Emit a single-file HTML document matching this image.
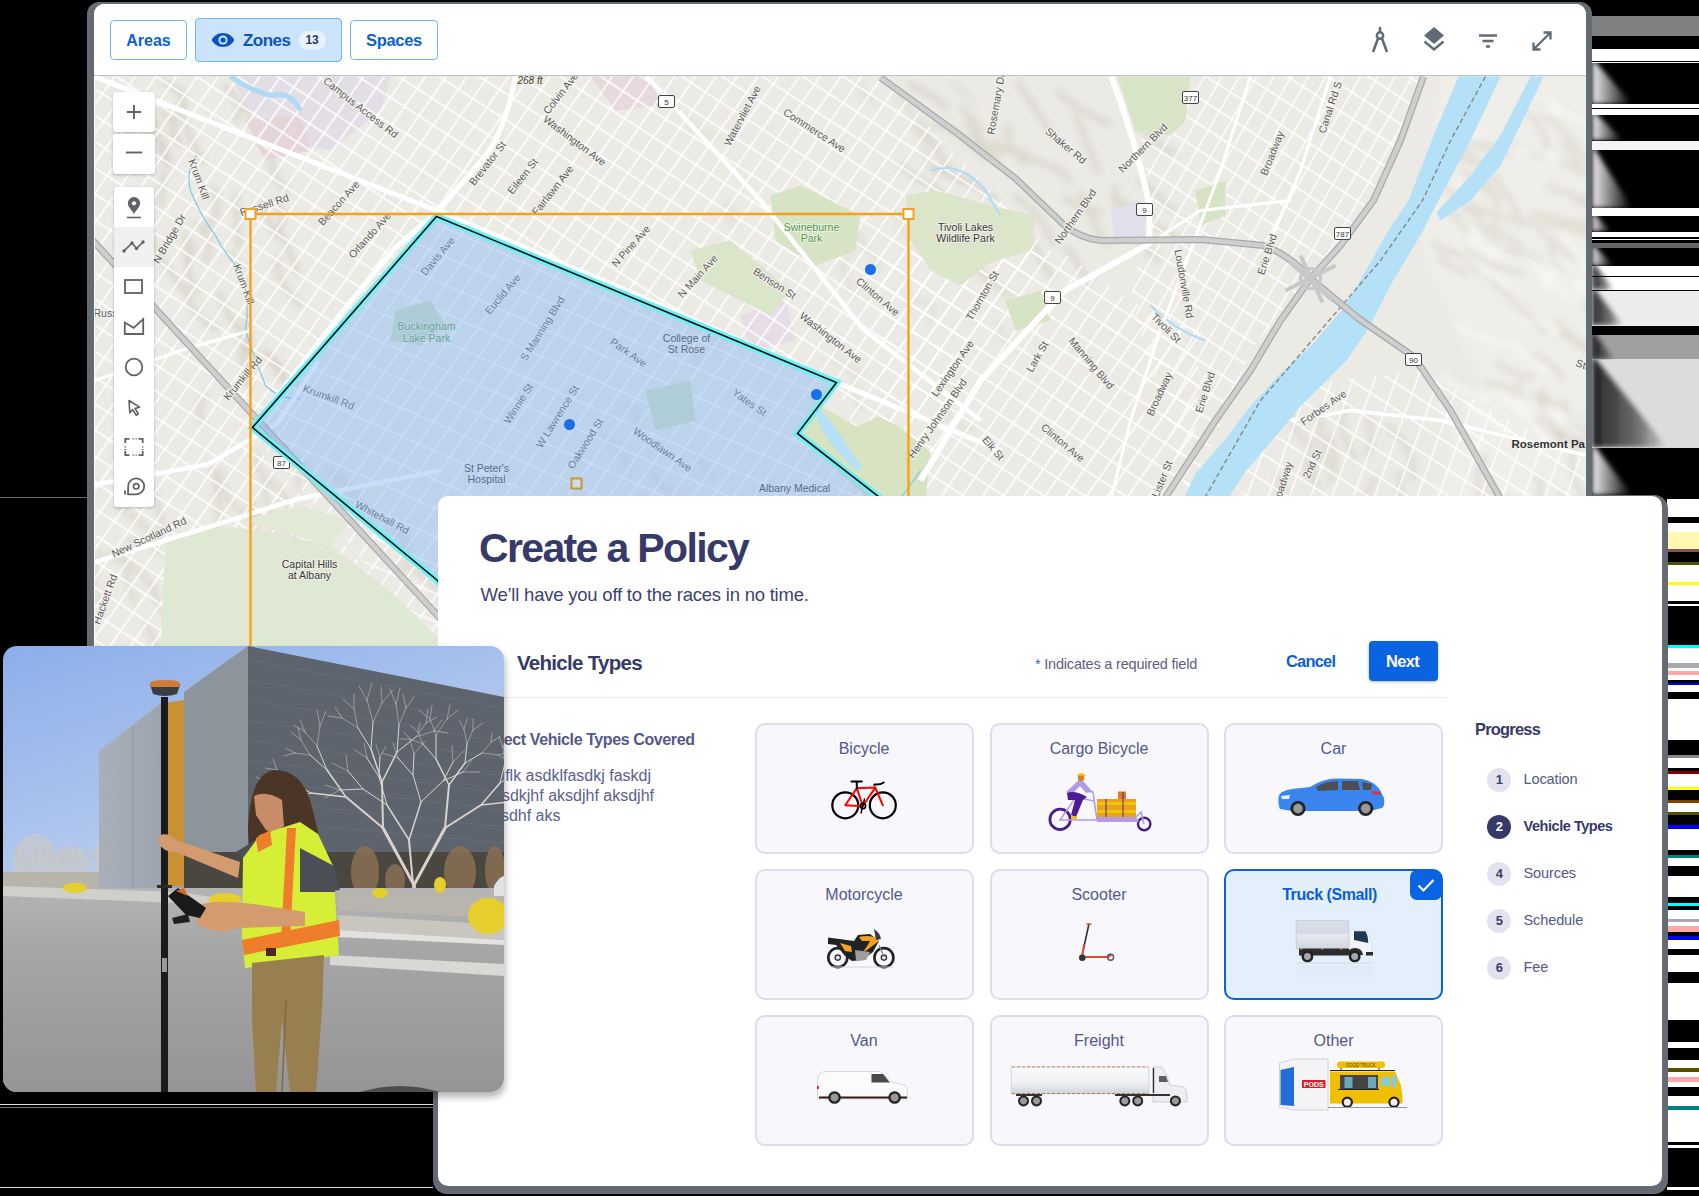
<!DOCTYPE html>
<html><head><meta charset="utf-8">
<style>
*{box-sizing:border-box;margin:0;padding:0}
html,body{width:1699px;height:1196px;overflow:hidden;background:#000;font-family:"Liberation Sans",sans-serif;position:relative}
.abs{position:absolute}
#stripR1{left:1592px;top:0;width:107px;height:495px;background:linear-gradient(to bottom,#000 0.0px 16.3px,#808080 16.3px 35.6px,#000 35.6px 49.0px,#fff 49.0px 60.7px,#000 60.7px 62.0px,#fff 62.0px 63.0px,#000 63.0px 104.0px,#fff 104.0px 108.0px,#000 108.0px 109.0px,#fff 109.0px 114.6px,#000 114.6px 140.6px,#f4f4f4 140.6px 149.6px,#000 149.6px 208.0px,#fff 208.0px 216.0px,#000 216.0px 231.8px,#fff 231.8px 237.0px,#000 237.0px 239.0px,#fff 239.0px 240.0px,#000 240.0px 242.7px,#666 242.7px 248.0px,#000 248.0px 265.7px,#fff 265.7px 276.3px,#000 276.3px 277.0px,#fff 277.0px 290.0px,#000 290.0px 291.0px,#ececec 291.0px 325.6px,#000 325.6px 335.0px,#a0a0a0 335.0px 359.5px,#dcdcdc 359.5px 447.6px,#000 447.6px 495.0px)}
#stripR2{left:1667px;top:495px;width:32px;height:701px;background:linear-gradient(to bottom,#000 0.0px 4.0px,#fff 4.0px 13.0px,#fff 13.0px 22.0px,#000 22.0px 28.0px,#fff 28.0px 37.0px,#fff8b0 37.0px 54.0px,#8a5050 54.0px 57.0px,#000 57.0px 67.0px,#555000 67.0px 70.0px,#fff 70.0px 87.0px,#ffff00 87.0px 90.0px,#fff 90.0px 106.0px,#000 106.0px 109.0px,#fff 109.0px 111.0px,#000 111.0px 150.0px,#00ffff 150.0px 153.0px,#fff 153.0px 168.0px,#aaa 168.0px 173.0px,#fff 173.0px 176.0px,#ffaaaa 176.0px 180.0px,#fff 180.0px 185.0px,#000 185.0px 188.0px,#0000ff 188.0px 190.0px,#fff 190.0px 197.0px,#000 197.0px 204.0px,#fff 204.0px 245.0px,#000 245.0px 260.0px,#888 260.0px 263.0px,#fff 263.0px 273.0px,#000 273.0px 276.0px,#800000 276.0px 279.0px,#fff 279.0px 292.0px,#ffff00 292.0px 295.0px,#000 295.0px 305.0px,#804000 305.0px 308.0px,#fff 308.0px 317.0px,#555000 317.0px 320.0px,#000 320.0px 330.0px,#0000ff 330.0px 334.0px,#fff 334.0px 355.0px,#000 355.0px 360.0px,#008080 360.0px 363.0px,#fff 363.0px 371.0px,#000 371.0px 381.0px,#fff 381.0px 402.0px,#000 402.0px 408.0px,#00ffff 408.0px 411.0px,#000 411.0px 415.0px,#fff 415.0px 424.0px,#aaa 424.0px 427.0px,#fff 427.0px 431.0px,#ffaaaa 431.0px 437.0px,#000 437.0px 441.0px,#0000ff 441.0px 445.0px,#fff 445.0px 454.0px,#000 454.0px 460.0px,#fff 460.0px 477.0px,#000 477.0px 488.0px,#fff 488.0px 525.0px,#000 525.0px 547.0px,#fff 547.0px 553.0px,#000 553.0px 565.0px,#fff 565.0px 573.0px,#555000 573.0px 577.0px,#fff 577.0px 582.0px,#ffaaaa 582.0px 587.0px,#fff 587.0px 592.0px,#000 592.0px 601.0px,#fff 601.0px 611.0px,#008080 611.0px 615.0px,#fff 615.0px 647.0px,#000 647.0px 650.0px,#fff 650.0px 653.0px,#000 653.0px 692.0px,#fff 692.0px 695.0px,#000 695.0px 701.0px)}
#win{left:87px;top:2px;width:1505px;height:1086px;background:#646b73;border-radius:12px 12px 0 0}
#winin{left:6.5px;top:1.5px;width:1492px;height:1084px;background:#fff;border-radius:10px 10px 0 0;overflow:hidden}
#hdr{left:0;top:0;width:1492px;height:72px;background:#fff;border-bottom:1px solid #b9c3cc}
.btn{position:absolute;border:1.5px solid #6cb6f6;border-radius:4px;color:#0b61d8;font-weight:bold;font-size:17px;text-align:center}
#map{left:1px;top:72px;width:1492px;height:1017px;overflow:hidden;background:#ebeae4}
#modalF{left:432.5px;top:495px;width:1235.5px;height:699px;background:#646b73;border-radius:14px}
#modal{left:438px;top:495.5px;width:1224px;height:690px;background:#fff;border-radius:10px}
.tb{background:#fff;border-radius:3px;box-shadow:0 1px 3px rgba(0,0,0,.25)}
.card{border:2px solid #dcdced;border-radius:10px;background:#f7f7fc}
.card.sel{border:2.5px solid #0b62d9;background:#e4effc}
#photo{left:3px;top:646px;width:501px;height:446px;border-radius:14px;overflow:hidden;box-shadow:1px 5px 7px rgba(0,0,0,.3)}
</style></head><body>
<div id="stripR1" class="abs"></div>
<div id="stripR2" class="abs"></div>
<svg class="abs" style="left:1592px;top:0" width="107" height="495"><defs><filter id="wb" x="-50%" y="-50%" width="200%" height="200%"><feGaussianBlur stdDeviation="2.5"/></filter><linearGradient id="gwb" x1="0" y1="0" x2="1" y2="0"><stop offset="0" stop-color="#f0f0f0"/><stop offset="1" stop-color="#f0f0f0" stop-opacity="0"/></linearGradient><linearGradient id="gwd" x1="0" y1="0" x2="1" y2="0"><stop offset="0" stop-color="#000"/><stop offset="0.6" stop-color="#222" stop-opacity=".7"/><stop offset="1" stop-color="#000" stop-opacity="0"/></linearGradient><clipPath id="cb0"><rect x="0" y="63.0" width="107" height="41.0"/></clipPath><clipPath id="cb1"><rect x="0" y="114.6" width="107" height="26.0"/></clipPath><clipPath id="cb2"><rect x="0" y="149.6" width="107" height="58.4"/></clipPath><clipPath id="cb3"><rect x="0" y="216.0" width="107" height="15.8"/></clipPath><clipPath id="cb4"><rect x="0" y="248.0" width="107" height="17.7"/></clipPath><clipPath id="cb5"><rect x="0" y="447.6" width="107" height="47.4"/></clipPath><clipPath id="cb6"><rect x="0" y="291.0" width="107" height="34.6"/></clipPath><clipPath id="cb7"><rect x="0" y="335.0" width="107" height="24.5"/></clipPath><clipPath id="cb8"><rect x="0" y="359.5" width="107" height="88.1"/></clipPath><clipPath id="cb9"><rect x="0" y="265.7" width="107" height="24.3"/></clipPath></defs><path clip-path="url(#cb0)" d="M0 58.0L40.0 104.0L0 104.0Z" fill="url(#gwb)" filter="url(#wb)"/><path clip-path="url(#cb1)" d="M0 109.6L31.2 140.6L0 140.6Z" fill="url(#gwb)" filter="url(#wb)"/><path clip-path="url(#cb2)" d="M0 144.6L40.0 208.0L0 208.0Z" fill="url(#gwb)" filter="url(#wb)"/><path clip-path="url(#cb3)" d="M0 211.0L19.0 231.8L0 231.8Z" fill="url(#gwb)" filter="url(#wb)"/><path clip-path="url(#cb4)" d="M0 243.0L21.2 265.7L0 265.7Z" fill="url(#gwb)" filter="url(#wb)"/><path clip-path="url(#cb5)" d="M0 442.6L40.0 495.0L0 495.0Z" fill="url(#gwb)" filter="url(#wb)"/><path clip-path="url(#cb6)" d="M0 286.0L31.1 325.6L0 325.6Z" fill="url(#gwd)" opacity="0.85" filter="url(#wb)"/><path clip-path="url(#cb7)" d="M0 330.0L22.1 359.5L0 359.5Z" fill="url(#gwd)" opacity="0.85" filter="url(#wb)"/><path clip-path="url(#cb8)" d="M0 354.5L75.0 447.6L0 447.6Z" fill="url(#gwd)" opacity="0.85" filter="url(#wb)"/><path clip-path="url(#cb9)" d="M0 260.7L21.9 290.0L0 290.0Z" fill="url(#gwd)" opacity="0.85" filter="url(#wb)"/></svg>
<div class="abs" style="left:0;top:496.5px;width:88px;height:1.2px;background:#666"></div>
<div class="abs" style="left:0;top:1104px;width:433px;height:1px;background:#ddd"></div>
<div class="abs" style="left:0;top:1187px;width:433px;height:1px;background:#ddd"></div>
<div class="abs" style="left:0;top:1107px;width:433px;height:1px;background:#777"></div>

<div id="modalF" class="abs"></div>
<div id="win" class="abs">
 <div id="winin" class="abs">
  <div id="hdr" class="abs">

   <div class="btn" style="left:16.5px;top:16.5px;width:77px;height:39.5px;line-height:39.5px;font-size:16px;letter-spacing:0px">Areas</div>
   <div class="btn" style="left:101.5px;top:14.5px;width:146.5px;height:43.5px;background:#cce4fb;color:#0b54c0"></div>
   <svg class="abs" style="left:117px;top:28px" width="24" height="16" viewBox="0 0 24 16"><path d="M12 1C6.5 1 2.2 4.4 .6 8c1.6 3.6 5.9 7 11.4 7s9.8-3.4 11.4-7C21.8 4.4 17.5 1 12 1z" fill="#0b54c0"/><circle cx="12" cy="8" r="4.6" fill="#cce4fb"/><circle cx="12" cy="8" r="2.6" fill="#0b54c0"/></svg>
   <div class="abs" style="left:149.5px;top:27px;font-size:17px;font-weight:bold;color:#0b54c0;letter-spacing:-0.55px;line-height:20px">Zones</div>
   <div class="abs" style="left:205px;top:27.5px;width:27px;height:19px;border-radius:10px;background:#e7f2fd;font-size:12px;color:#2b3a55;text-align:center;line-height:19px;font-weight:bold;letter-spacing:-0.2px">13</div>
   <div class="btn" style="left:256.5px;top:16.5px;width:88px;height:39.5px;line-height:39.5px;font-size:16.5px;letter-spacing:-0.3px">Spaces</div>
   <svg class="abs" style="left:1264px;top:21px" width="240" height="32" viewBox="0 0 240 32" fill="none" stroke="#5f6b77" stroke-width="2.6">
    <g transform="translate(22,0)"><line x1="0" y1="3" x2="0" y2="7" stroke-linecap="round"/><circle cx="0" cy="10.5" r="3.2" stroke-width="2.4"/><path d="M-2 13.5L-7 27M2 13.5L7 27" stroke-width="2.6"/></g>
    <g transform="translate(76,16)"><path d="M0 -14L10 -5.5L0 3L-10 -5.5Z" fill="#5f6b77" stroke="none"/><path d="M-9.5 0.5L0 8.5L9.5 0.5" stroke-width="2.4"/></g>
    <g transform="translate(130,0)"><path d="M-9 10.5H9M-5.5 16H5.5M-2 21.5H2" stroke-width="2.3"/></g>
    <g transform="translate(184,16)"><path d="M-8.5 8.5L8.5 -8.5M1.5 -8.5H8.5V-1.5M-8.5 1.5V8.5H-1.5" stroke-width="2.3"/></g>
   </svg>
  </div>
  <div id="map" class="abs"><svg width="1492" height="1017" viewBox="94.5 75.5 1492 1017" style="display:block">
<defs>
<pattern id="pA" width="17" height="400" patternUnits="userSpaceOnUse" patternTransform="rotate(35)"><rect x="0" y="0" width="1.8" height="400" fill="#fff"/></pattern>
<pattern id="pB" width="400" height="22" patternUnits="userSpaceOnUse" patternTransform="rotate(33)"><rect x="0" y="0" width="400" height="1.8" fill="#fff"/></pattern>
<pattern id="pC" width="15" height="400" patternUnits="userSpaceOnUse" patternTransform="rotate(30)"><rect x="0" y="0" width="1.6" height="400" fill="#fff"/></pattern>
<pattern id="pD" width="400" height="26" patternUnits="userSpaceOnUse" patternTransform="rotate(24)"><rect x="0" y="0" width="400" height="1.6" fill="#fff"/></pattern>
<pattern id="pE" width="20" height="400" patternUnits="userSpaceOnUse" patternTransform="rotate(20)"><rect x="0" y="0" width="1.6" height="400" fill="#fff"/></pattern>
<filter id="blur4" x="-50%" y="-50%" width="200%" height="200%"><feGaussianBlur stdDeviation="3"/></filter>
<filter id="blur2" x="-20%" y="-20%" width="140%" height="140%"><feGaussianBlur stdDeviation="1.6"/></filter>
</defs>
<rect x="94" y="75" width="1500" height="1020" fill="#ebeae4"/>
<path d="M1440 76H1590V500H1430L1480 380L1420 250Z" fill="#efeee9" filter="url(#blur4)"/>
<path d="M1482 140Q1514 144 1543 155M1439 257Q1436 258 1466 274M1498 363Q1520 378 1532 376M1522 221Q1575 225 1599 238M1453 129Q1455 148 1482 164M1532 213Q1543 214 1588 226M1539 231Q1555 242 1574 260M1557 321Q1575 341 1590 347M1547 185Q1581 201 1623 207M1454 251Q1477 264 1478 273M1570 194Q1598 213 1620 235M1564 402Q1566 424 1604 439M1534 418Q1561 436 1598 447M1434 242Q1434 253 1471 253M1451 172Q1449 191 1480 212M1518 382Q1530 408 1560 438M1487 382Q1512 388 1562 405M1467 250Q1475 260 1522 273M1489 277Q1517 306 1544 331M1538 108Q1578 142 1587 164M1493 222Q1488 225 1519 245M1463 144Q1466 142 1509 154M1446 210Q1460 216 1465 235M1470 205Q1507 221 1517 218M1505 250Q1515 249 1538 259M1563 143Q1572 149 1579 170M1517 99Q1546 127 1546 147M1472 211Q1486 231 1497 240M1483 164Q1515 200 1519 224M1561 334Q1572 337 1594 358M1434 182Q1468 196 1465 212M1580 416Q1603 429 1648 453M1461 157Q1493 182 1497 208M1534 354Q1563 371 1560 377M1550 248Q1556 269 1575 277M1585 221Q1608 235 1612 263M1450 140Q1460 175 1498 198M1587 307Q1591 312 1625 336M1585 304Q1598 335 1616 351M1562 160Q1571 170 1601 177" stroke="#cdc7b8" stroke-width="6" fill="none" opacity="0.4" filter="url(#blur4)" stroke-linecap="round"/>
<path d="M1471 228Q1476 242 1492 258M1523 388Q1538 410 1552 431M1514 96Q1518 111 1563 113M1458 246Q1477 267 1510 287M1519 349Q1523 355 1547 371M1554 258Q1589 278 1592 301M1528 257Q1546 277 1568 296M1506 401Q1543 422 1545 453M1520 401Q1539 411 1588 422M1442 169Q1465 189 1466 193M1455 326Q1500 345 1515 345M1465 404Q1505 425 1506 432M1456 232Q1469 241 1506 258M1546 96Q1551 108 1594 127M1530 259Q1550 283 1547 288M1447 178Q1448 182 1468 202M1498 391Q1516 413 1563 418M1521 321Q1546 323 1555 329M1442 400Q1445 430 1481 447M1441 375Q1466 395 1488 399M1473 133Q1483 136 1525 154M1438 157Q1469 162 1479 176M1510 149Q1523 143 1557 158M1547 272Q1581 275 1580 294M1561 233Q1574 254 1595 276" stroke="#ffffff" stroke-width="5" fill="none" opacity="0.5" filter="url(#blur4)" stroke-linecap="round"/>
<path d="M1065 247Q1084 269 1086 285M997 139Q994 151 1026 153M961 108Q984 126 977 137M968 121Q969 134 998 150M963 244Q976 278 1010 294M974 141Q985 150 998 160M948 166Q944 172 974 182M910 84Q931 95 946 106M1080 192Q1089 215 1106 244M1136 105Q1136 135 1173 152M1114 187Q1114 213 1143 238M1021 222Q1039 257 1051 276M1064 198Q1067 202 1100 212M925 222Q947 246 958 263M1017 81Q1034 107 1051 133M1058 91Q1066 103 1108 123M1075 115Q1086 140 1097 170M1015 196Q1040 211 1053 243M935 123Q962 131 984 158M915 126Q938 145 948 172M1024 159Q1062 164 1068 180M1135 239Q1159 259 1157 260M1008 126Q1004 145 1023 161M934 169Q977 185 995 200M1113 200Q1121 208 1130 235M901 164Q906 174 940 191M976 223Q997 228 992 248M1122 201Q1144 218 1177 239M1140 180Q1147 186 1173 210M924 222Q923 236 941 260" stroke="#c4bfb1" stroke-width="6" fill="none" opacity="0.4" filter="url(#blur4)" stroke-linecap="round"/>
<path d="M212 188Q224 213 206 226M228 601Q243 620 241 657M243 337Q237 353 249 388M270 153Q270 176 286 191M277 228Q289 248 297 272M163 172Q162 183 160 204M267 648Q266 657 289 682M188 132Q198 155 203 162M245 315Q245 331 254 354M149 238Q165 265 181 287M261 203Q265 217 277 234M274 564Q272 590 308 607M265 350Q276 376 295 385M256 568Q254 587 283 620M213 469Q221 503 217 527M204 394Q194 416 204 421M230 253Q243 270 244 279M156 120Q155 136 164 163M224 86Q248 106 235 120M264 351Q290 370 279 380M183 92Q182 109 188 135M233 607Q237 619 254 633M236 193Q237 213 238 246M276 258Q277 286 301 305M181 623Q181 639 203 659M233 621Q227 644 244 649M160 110Q181 130 169 135M243 649Q242 684 266 701M244 98Q248 117 262 143M164 82Q189 90 177 114M275 198Q288 216 274 236M147 350Q133 366 143 388M266 97Q276 108 265 137M145 116Q168 149 171 167M187 235Q183 268 197 293M184 237Q201 252 185 262M272 94Q295 119 281 126M194 223Q217 236 205 262M252 501Q257 524 254 555M185 286Q188 312 216 329M175 117Q170 139 180 142M264 643Q258 657 284 671M239 335Q250 354 250 366M245 563Q272 579 272 603M219 293Q222 310 245 337" stroke="#c2bcae" stroke-width="5" fill="none" opacity="0.45" filter="url(#blur4)" stroke-linecap="round"/>
<path d="M147 625Q158 656 177 669M270 481Q298 503 288 540M258 610Q242 638 263 674M135 472Q165 501 160 536M394 529Q415 541 401 568M300 566Q296 577 321 599M182 562Q181 580 218 605M329 471Q354 488 356 503M116 452Q130 465 133 495M151 583Q157 611 178 621M202 555Q227 584 224 593M220 473Q219 504 258 519M241 610Q241 627 245 656M99 551Q85 582 104 607M222 541Q234 564 243 570M132 538Q120 562 133 600M420 645Q455 659 457 678M407 566Q439 584 449 613M234 616Q243 638 275 664M273 514Q293 536 295 542M108 554Q144 566 153 594M301 551Q314 575 333 596M241 575Q234 598 264 617M263 482Q267 505 275 541M258 454Q250 468 274 484M271 439Q300 464 310 478M271 442Q302 456 297 485M391 649Q383 688 400 708M264 640Q298 674 309 690M117 507Q153 525 157 552" stroke="#c4beb0" stroke-width="6" fill="none" opacity="0.35" filter="url(#blur4)" stroke-linecap="round"/>
<path d="M926 137Q919 149 935 171M802 211Q797 227 819 225M872 456Q861 468 881 479M855 229Q870 256 879 268M642 497Q666 507 667 527M996 321Q1000 329 1008 349M897 96Q919 121 930 127M834 357Q828 358 860 372M846 259Q836 271 856 293M861 85Q852 90 875 100M690 323Q709 335 718 348M654 473Q649 484 676 490M949 408Q941 422 972 430M825 225Q854 245 849 256M699 459Q702 463 711 477M623 406Q646 408 634 423M680 334Q701 343 696 365M724 203Q738 218 729 224M603 434Q625 450 628 468M690 121Q695 133 713 135M878 434Q895 447 908 463M915 298Q941 305 928 323M952 82Q972 101 973 101M898 215Q904 240 930 248M852 370Q855 396 860 409" stroke="#cdc8bb" stroke-width="5" fill="none" opacity="0.3" filter="url(#blur4)" stroke-linecap="round"/>
<path d="M1487 483Q1490 501 1488 526M1322 455Q1306 461 1318 487M1286 491Q1276 501 1303 528M1485 456Q1468 483 1486 507M1374 478Q1354 513 1368 532M1561 493Q1552 499 1573 524M1538 477Q1542 498 1536 526M1284 392Q1287 415 1304 441M1257 411Q1252 426 1258 449M1578 440Q1562 466 1583 496M1398 473Q1401 487 1400 513M1543 391Q1534 410 1565 441M1509 497Q1512 518 1515 527M1313 439Q1302 468 1310 480M1346 406Q1335 434 1355 456M1278 475Q1282 497 1276 525M1386 427Q1415 443 1412 478M1320 412Q1320 447 1330 468M1329 435Q1339 461 1329 481M1368 419Q1374 441 1366 454" stroke="#c4beb0" stroke-width="6" fill="none" opacity="0.35" filter="url(#blur4)" stroke-linecap="round"/>
<path d="M230 76H390L380 110L330 150L280 140L250 110Z" fill="#e3dee6"/>
<path d="M245 120L300 115L310 150L265 160Z" fill="#e5d5d8"/>
<path d="M590 76H650L660 105L615 110Z" fill="#e8d9dc"/>
<path d="M740 315L785 300L795 340L750 350Z" fill="#e6dde6"/>
<path d="M1110 210L1140 200L1145 240L1115 245Z" fill="#dfe0ea"/>
<path d="M94 76H520L440 215L250 440L94 450Z" fill="url(#pA)" opacity="0.85"/>
<path d="M94 76H520L440 215L250 440L94 450Z" fill="url(#pB)" opacity="0.85"/>
<path d="M520 76H890L940 140L1000 200L1050 250L990 320L900 500L880 500L835 382L436 215Z" fill="url(#pA)" opacity="0.85"/>
<path d="M520 76H890L940 140L1000 200L1050 250L990 320L900 500L880 500L835 382L436 215Z" fill="url(#pB)" opacity="0.85"/>
<path d="M436 215L835 382L797 433L900 520L440 650L250 430Z" fill="url(#pA)" opacity="0.85"/>
<path d="M436 215L835 382L797 433L900 520L440 650L250 430Z" fill="url(#pD)" opacity="0.85"/>
<path d="M880 250L1060 250L1130 300L1200 330L1190 500L880 500Z" fill="url(#pA)" opacity="0.85"/>
<path d="M880 250L1060 250L1130 300L1200 330L1190 500L880 500Z" fill="url(#pB)" opacity="0.85"/>
<path d="M1130 76H1420L1400 140L1350 230L1250 350L1190 500L1130 300L1150 200Z" fill="url(#pC)" opacity="0.85"/>
<path d="M1130 76H1420L1400 140L1350 230L1250 350L1190 500L1130 300L1150 200Z" fill="url(#pB)" opacity="0.85"/>
<path d="M1260 390L1420 370L1586 460V500H1240Z" fill="url(#pE)" opacity="0.85"/>
<path d="M1260 390L1420 370L1586 460V500H1240Z" fill="url(#pB)" opacity="0.85"/>
<path d="M94 450L250 440L440 650H94Z" fill="url(#pA)" opacity="0.85"/>
<path d="M94 450L250 440L440 650H94Z" fill="url(#pB)" opacity="0.85"/>
<path d="M165 540Q200 520 260 530L330 545L400 600L440 640V660H160Z" fill="#dfe8d2"/>
<path d="M240 520L300 505L350 520L330 545Z" fill="#e2e9d6"/>
<path d="M770 195L800 185L860 215L855 250L815 265L775 240Z" fill="#d6e3c4"/>
<path d="M905 195L935 190L990 205L1035 215L1030 250L990 262L960 285L930 270L910 240Z" fill="#dae5ca"/>
<path d="M690 250L730 240L790 290L770 315L700 280Z" fill="#dbe5c9"/>
<path d="M1117 76H1190L1185 120L1170 135L1135 130Z" fill="#d8e4c6"/>
<path d="M1195 190L1225 180L1225 215L1200 225Z" fill="#d6e3c4"/>
<path d="M797 433L819 405L856 426L878 416L899 426L930 452L925 500H870Z" fill="#d8e3c2"/>
<path d="M820 410Q830 420 840 435Q852 455 862 466L856 470Q840 455 828 440Q818 425 815 413Z" fill="#b4e1f7"/>
<path d="M645 390L690 380L695 420L655 430Z" fill="#d3e2c0"/>
<path d="M1005 300L1040 290L1050 320L1015 330Z" fill="#d6e3c4"/>
<path d="M395 310L430 300L445 325L420 345L390 340Z" fill="#cfe0bd"/>
<path d="M196 155Q185 170 190 190Q200 215 215 235Q225 255 240 270Q250 300 245 330Q255 360 265 385Q280 400 300 398" stroke="#7ec8e0" stroke-width="1.2" fill="none"/>
<path d="M880 520Q900 500 920 470" stroke="#7ec8e0" stroke-width="1.2" fill="none"/>
<path d="M930 170Q960 160 985 190L1000 215" stroke="#aedaf5" stroke-width="2" fill="none"/>
<path d="M1150 305Q1175 330 1205 340" stroke="#aedaf5" stroke-width="2" fill="none"/>
<path d="M230 76Q250 90 270 95Q290 90 300 110" stroke="#aedaf5" stroke-width="5" fill="none"/>
<path d="M94 76L441 212L640 296L836 382L1000 450" stroke="#fff" stroke-width="5" fill="none" stroke-linejoin="round"/>
<path d="M515 76Q505 130 483 158L436 212L395 247L342 311L250 430" stroke="#fff" stroke-width="5" fill="none" stroke-linejoin="round"/>
<path d="M646 76L760 200L863 329L980 420" stroke="#fff" stroke-width="4.5" fill="none" stroke-linejoin="round"/>
<path d="M94 484L207 464L277 423L318 361" stroke="#fff" stroke-width="4.5" fill="none" stroke-linejoin="round"/>
<path d="M90 563L213 525L295 499L440 470" stroke="#fff" stroke-width="4.5" fill="none" stroke-linejoin="round"/>
<path d="M1111 76Q1135 140 1149 205L1149 243L1063 291L980 380L920 480" stroke="#fff" stroke-width="6" fill="none" stroke-linejoin="round"/>
<path d="M1149 243L1200 210L1290 200" stroke="#fff" stroke-width="3" fill="none" stroke-linejoin="round"/>
<path d="M1250 76L1220 170L1190 250L1160 330L1130 420L1110 500" stroke="#fff" stroke-width="3" fill="none" stroke-linejoin="round"/>
<path d="M1330 76L1300 170L1270 240" stroke="#fff" stroke-width="3" fill="none" stroke-linejoin="round"/>
<path d="M1290 420L1350 410L1440 420L1586 455" stroke="#fff" stroke-width="3.5" fill="none" stroke-linejoin="round"/>
<path d="M94 380L180 350L250 330" stroke="#fff" stroke-width="3" fill="none" stroke-linejoin="round"/>
<path d="M1458 76L1435 130L1408 200L1386 233L1358 283L1341 310L1310 346L1280 373L1248 408L1223 441L1195 473L1184 497H1228L1245 471L1275 436L1300 406L1346 360L1368 328L1391 283L1421 233L1438 200L1470 140L1500 76Z" fill="#b4e1f7"/>
<path d="M1530 76H1543L1522 120L1500 165L1470 200L1440 220L1436 212L1470 175L1500 135Z" fill="#b4e1f7"/>
<path d="M1485 76L1450 140L1422 200L1380 260L1320 330L1260 400L1205 496" stroke="#7d7a73" stroke-width="1.2" stroke-dasharray="5 3" fill="none"/>
<path d="M60 205L438 616L520 700" stroke="#a9a9a9" stroke-width="7" fill="none" stroke-linejoin="round"/>
<path d="M60 205L438 616L520 700" stroke="#cfcfcf" stroke-width="4.5" fill="none" stroke-linejoin="round"/>
<path d="M880 77L957 133L1015 178L1063 224Q1080 238 1100 240L1200 239L1263 245Q1290 255 1310 278L1358 318L1413 356L1450 410L1501 500" stroke="#a9a9a9" stroke-width="7" fill="none" stroke-linejoin="round"/>
<path d="M880 77L957 133L1015 178L1063 224Q1080 238 1100 240L1200 239L1263 245Q1290 255 1310 278L1358 318L1413 356L1450 410L1501 500" stroke="#cfcfcf" stroke-width="4.5" fill="none" stroke-linejoin="round"/>
<path d="M1423 76L1400 140L1373 200L1340 245L1310 278L1280 320L1250 370L1215 420L1165 497" stroke="#a9a9a9" stroke-width="7" fill="none" stroke-linejoin="round"/>
<path d="M1423 76L1400 140L1373 200L1340 245L1310 278L1280 320L1250 370L1215 420L1165 497" stroke="#cfcfcf" stroke-width="4.5" fill="none" stroke-linejoin="round"/>
<path d="M1290 262L1332 300M1285 290L1335 265M1300 255L1322 302" stroke="#c8c8c8" stroke-width="4"/><circle cx="1310" cy="278" r="10" fill="none" stroke="#c8c8c8" stroke-width="3"/>
<rect x="658.0" y="95.0" width="16" height="12" rx="1.5" fill="#fff" stroke="#444" stroke-width="1"/><text x="666.0" y="104.0" font-size="8" text-anchor="middle" fill="#333" font-family="Liberation Sans">5</text>
<rect x="1182.0" y="91.0" width="16" height="12" rx="1.5" fill="#fff" stroke="#444" stroke-width="1"/><text x="1190.0" y="100.0" font-size="8" text-anchor="middle" fill="#333" font-family="Liberation Sans">377</text>
<rect x="1136.0" y="203.0" width="16" height="12" rx="1.5" fill="#fff" stroke="#444" stroke-width="1"/><text x="1144.0" y="212.0" font-size="8" text-anchor="middle" fill="#333" font-family="Liberation Sans">9</text>
<rect x="1044.0" y="291.0" width="16" height="12" rx="1.5" fill="#fff" stroke="#444" stroke-width="1"/><text x="1052.0" y="300.0" font-size="8" text-anchor="middle" fill="#333" font-family="Liberation Sans">9</text>
<rect x="1334.0" y="227.0" width="16" height="12" rx="1.5" fill="#fff" stroke="#444" stroke-width="1"/><text x="1342.0" y="236.0" font-size="8" text-anchor="middle" fill="#333" font-family="Liberation Sans">787</text>
<rect x="1405.0" y="353.0" width="16" height="12" rx="1.5" fill="#fff" stroke="#444" stroke-width="1"/><text x="1413.0" y="362.0" font-size="8" text-anchor="middle" fill="#333" font-family="Liberation Sans">90</text>
<rect x="273.0" y="456.0" width="16" height="12" rx="1.5" fill="#fff" stroke="#444" stroke-width="1"/><text x="281.0" y="465.0" font-size="8" text-anchor="middle" fill="#333" font-family="Liberation Sans">87</text>
<text transform="translate(358 110) rotate(38)" font-size="10.5" text-anchor="middle" fill="#5a5a5a" font-family="Liberation Sans" stroke="#f4f3ee" stroke-width="2" paint-order="stroke">Campus Access Rd</text>
<text transform="translate(563 95) rotate(-52)" font-size="10.5" text-anchor="middle" fill="#5a5a5a" font-family="Liberation Sans" stroke="#f4f3ee" stroke-width="2" paint-order="stroke">Colvin Ave</text>
<text transform="translate(572 143) rotate(37)" font-size="10.5" text-anchor="middle" fill="#5a5a5a" font-family="Liberation Sans" stroke="#f4f3ee" stroke-width="2" paint-order="stroke">Washington Ave</text>
<text transform="translate(490 165) rotate(-52)" font-size="10.5" text-anchor="middle" fill="#5a5a5a" font-family="Liberation Sans" stroke="#f4f3ee" stroke-width="2" paint-order="stroke">Brevator St</text>
<text transform="translate(525 178) rotate(-52)" font-size="10.5" text-anchor="middle" fill="#5a5a5a" font-family="Liberation Sans" stroke="#f4f3ee" stroke-width="2" paint-order="stroke">Eileen St</text>
<text transform="translate(555 192) rotate(-52)" font-size="10.5" text-anchor="middle" fill="#5a5a5a" font-family="Liberation Sans" stroke="#f4f3ee" stroke-width="2" paint-order="stroke">Fairlawn Ave</text>
<text transform="translate(341 205) rotate(-48)" font-size="10.5" text-anchor="middle" fill="#5a5a5a" font-family="Liberation Sans" stroke="#f4f3ee" stroke-width="2" paint-order="stroke">Beacon Ave</text>
<text transform="translate(372 237) rotate(-48)" font-size="10.5" text-anchor="middle" fill="#5a5a5a" font-family="Liberation Sans" stroke="#f4f3ee" stroke-width="2" paint-order="stroke">Orlando Ave</text>
<text transform="translate(265 208) rotate(-18)" font-size="10.5" text-anchor="middle" fill="#5a5a5a" font-family="Liberation Sans" stroke="#f4f3ee" stroke-width="2" paint-order="stroke">Russell Rd</text>
<text transform="translate(172 240) rotate(-60)" font-size="10.5" text-anchor="middle" fill="#5a5a5a" font-family="Liberation Sans" stroke="#f4f3ee" stroke-width="2" paint-order="stroke">N Bridge Dr</text>
<text transform="translate(195 180) rotate(70)" font-size="10.5" text-anchor="middle" fill="#5a5a5a" font-family="Liberation Sans" stroke="#f4f3ee" stroke-width="2" paint-order="stroke">Krum Kill</text>
<text transform="translate(240 285) rotate(70)" font-size="10.5" text-anchor="middle" fill="#5a5a5a" font-family="Liberation Sans" stroke="#f4f3ee" stroke-width="2" paint-order="stroke">Krum Kill</text>
<text transform="translate(745 117) rotate(-62)" font-size="10.5" text-anchor="middle" fill="#5a5a5a" font-family="Liberation Sans" stroke="#f4f3ee" stroke-width="2" paint-order="stroke">Watervliet Ave</text>
<text transform="translate(812 133) rotate(33)" font-size="10.5" text-anchor="middle" fill="#5a5a5a" font-family="Liberation Sans" stroke="#f4f3ee" stroke-width="2" paint-order="stroke">Commerce Ave</text>
<text transform="translate(633 248) rotate(-48)" font-size="10.5" text-anchor="middle" fill="#5a5a5a" font-family="Liberation Sans" stroke="#f4f3ee" stroke-width="2" paint-order="stroke">N Pine Ave</text>
<text transform="translate(700 278) rotate(-48)" font-size="10.5" text-anchor="middle" fill="#5a5a5a" font-family="Liberation Sans" stroke="#f4f3ee" stroke-width="2" paint-order="stroke">N Main Ave</text>
<text transform="translate(772 286) rotate(33)" font-size="10.5" text-anchor="middle" fill="#5a5a5a" font-family="Liberation Sans" stroke="#f4f3ee" stroke-width="2" paint-order="stroke">Benson St</text>
<text transform="translate(875 299) rotate(40)" font-size="10.5" text-anchor="middle" fill="#5a5a5a" font-family="Liberation Sans" stroke="#f4f3ee" stroke-width="2" paint-order="stroke">Clinton Ave</text>
<text transform="translate(828 340) rotate(38)" font-size="10.5" text-anchor="middle" fill="#5a5a5a" font-family="Liberation Sans" stroke="#f4f3ee" stroke-width="2" paint-order="stroke">Washington Ave</text>
<text transform="translate(440 258) rotate(-50)" font-size="10.5" text-anchor="middle" fill="#5a5a5a" font-family="Liberation Sans" stroke="#f4f3ee" stroke-width="2" paint-order="stroke">Davis Ave</text>
<text transform="translate(505 296) rotate(-50)" font-size="10.5" text-anchor="middle" fill="#5a5a5a" font-family="Liberation Sans" stroke="#f4f3ee" stroke-width="2" paint-order="stroke">Euclid Ave</text>
<text transform="translate(545 330) rotate(-58)" font-size="10.5" text-anchor="middle" fill="#5a5a5a" font-family="Liberation Sans" stroke="#f4f3ee" stroke-width="2" paint-order="stroke">S Manning Blvd</text>
<text transform="translate(626 355) rotate(35)" font-size="10.5" text-anchor="middle" fill="#5a5a5a" font-family="Liberation Sans" stroke="#f4f3ee" stroke-width="2" paint-order="stroke">Park Ave</text>
<text transform="translate(747 405) rotate(35)" font-size="10.5" text-anchor="middle" fill="#5a5a5a" font-family="Liberation Sans" stroke="#f4f3ee" stroke-width="2" paint-order="stroke">Yates St</text>
<text transform="translate(521 405) rotate(-58)" font-size="10.5" text-anchor="middle" fill="#5a5a5a" font-family="Liberation Sans" stroke="#f4f3ee" stroke-width="2" paint-order="stroke">Winnie St</text>
<text transform="translate(560 418) rotate(-58)" font-size="10.5" text-anchor="middle" fill="#5a5a5a" font-family="Liberation Sans" stroke="#f4f3ee" stroke-width="2" paint-order="stroke">W Lawrence St</text>
<text transform="translate(588 445) rotate(-58)" font-size="10.5" text-anchor="middle" fill="#5a5a5a" font-family="Liberation Sans" stroke="#f4f3ee" stroke-width="2" paint-order="stroke">Oakwood St</text>
<text transform="translate(660 452) rotate(35)" font-size="10.5" text-anchor="middle" fill="#5a5a5a" font-family="Liberation Sans" stroke="#f4f3ee" stroke-width="2" paint-order="stroke">Woodlawn Ave</text>
<text transform="translate(327 400) rotate(20)" font-size="10.5" text-anchor="middle" fill="#5a5a5a" font-family="Liberation Sans" stroke="#f4f3ee" stroke-width="2" paint-order="stroke">Krumkill Rd</text>
<text transform="translate(245 380) rotate(-50)" font-size="10.5" text-anchor="middle" fill="#5a5a5a" font-family="Liberation Sans" stroke="#f4f3ee" stroke-width="2" paint-order="stroke">Krumkill Rd</text>
<text transform="translate(380 520) rotate(28)" font-size="10.5" text-anchor="middle" fill="#5a5a5a" font-family="Liberation Sans" stroke="#f4f3ee" stroke-width="2" paint-order="stroke">Whitehall Rd</text>
<text transform="translate(999 104) rotate(-80)" font-size="10.5" text-anchor="middle" fill="#5a5a5a" font-family="Liberation Sans" stroke="#f4f3ee" stroke-width="2" paint-order="stroke">Rosemary Dr</text>
<text transform="translate(1063 148) rotate(40)" font-size="10.5" text-anchor="middle" fill="#5a5a5a" font-family="Liberation Sans" stroke="#f4f3ee" stroke-width="2" paint-order="stroke">Shaker Rd</text>
<text transform="translate(1145 150) rotate(-45)" font-size="10.5" text-anchor="middle" fill="#5a5a5a" font-family="Liberation Sans" stroke="#f4f3ee" stroke-width="2" paint-order="stroke">Northern Blvd</text>
<text transform="translate(1078 218) rotate(-55)" font-size="10.5" text-anchor="middle" fill="#5a5a5a" font-family="Liberation Sans" stroke="#f4f3ee" stroke-width="2" paint-order="stroke">Northern Blvd</text>
<text transform="translate(1180 284) rotate(80)" font-size="10.5" text-anchor="middle" fill="#5a5a5a" font-family="Liberation Sans" stroke="#f4f3ee" stroke-width="2" paint-order="stroke">Loudonville Rd</text>
<text transform="translate(1275 154) rotate(-68)" font-size="10.5" text-anchor="middle" fill="#5a5a5a" font-family="Liberation Sans" stroke="#f4f3ee" stroke-width="2" paint-order="stroke">Broadway</text>
<text transform="translate(1333 108) rotate(-72)" font-size="10.5" text-anchor="middle" fill="#5a5a5a" font-family="Liberation Sans" stroke="#f4f3ee" stroke-width="2" paint-order="stroke">Canal Rd S</text>
<text transform="translate(1270 255) rotate(-72)" font-size="10.5" text-anchor="middle" fill="#5a5a5a" font-family="Liberation Sans" stroke="#f4f3ee" stroke-width="2" paint-order="stroke">Erie Blvd</text>
<text transform="translate(985 297) rotate(-60)" font-size="10.5" text-anchor="middle" fill="#5a5a5a" font-family="Liberation Sans" stroke="#f4f3ee" stroke-width="2" paint-order="stroke">Thornton St</text>
<text transform="translate(955 370) rotate(-55)" font-size="10.5" text-anchor="middle" fill="#5a5a5a" font-family="Liberation Sans" stroke="#f4f3ee" stroke-width="2" paint-order="stroke">Lexington Ave</text>
<text transform="translate(1040 358) rotate(-60)" font-size="10.5" text-anchor="middle" fill="#5a5a5a" font-family="Liberation Sans" stroke="#f4f3ee" stroke-width="2" paint-order="stroke">Lark St</text>
<text transform="translate(1088 365) rotate(50)" font-size="10.5" text-anchor="middle" fill="#5a5a5a" font-family="Liberation Sans" stroke="#f4f3ee" stroke-width="2" paint-order="stroke">Manning Blvd</text>
<text transform="translate(1163 330) rotate(45)" font-size="10.5" text-anchor="middle" fill="#5a5a5a" font-family="Liberation Sans" stroke="#f4f3ee" stroke-width="2" paint-order="stroke">Tivoli St</text>
<text transform="translate(1162 395) rotate(-65)" font-size="10.5" text-anchor="middle" fill="#5a5a5a" font-family="Liberation Sans" stroke="#f4f3ee" stroke-width="2" paint-order="stroke">Broadway</text>
<text transform="translate(1208 393) rotate(-72)" font-size="10.5" text-anchor="middle" fill="#5a5a5a" font-family="Liberation Sans" stroke="#f4f3ee" stroke-width="2" paint-order="stroke">Erie Blvd</text>
<text transform="translate(940 420) rotate(-55)" font-size="10.5" text-anchor="middle" fill="#5a5a5a" font-family="Liberation Sans" stroke="#f4f3ee" stroke-width="2" paint-order="stroke">Henry Johnson Blvd</text>
<text transform="translate(990 450) rotate(50)" font-size="10.5" text-anchor="middle" fill="#5a5a5a" font-family="Liberation Sans" stroke="#f4f3ee" stroke-width="2" paint-order="stroke">Elk St</text>
<text transform="translate(1060 445) rotate(40)" font-size="10.5" text-anchor="middle" fill="#5a5a5a" font-family="Liberation Sans" stroke="#f4f3ee" stroke-width="2" paint-order="stroke">Clinton Ave</text>
<text transform="translate(1325 410) rotate(-35)" font-size="10.5" text-anchor="middle" fill="#5a5a5a" font-family="Liberation Sans" stroke="#f4f3ee" stroke-width="2" paint-order="stroke">Forbes Ave</text>
<text transform="translate(1315 465) rotate(-65)" font-size="10.5" text-anchor="middle" fill="#5a5a5a" font-family="Liberation Sans" stroke="#f4f3ee" stroke-width="2" paint-order="stroke">2nd St</text>
<text transform="translate(1165 480) rotate(-68)" font-size="10.5" text-anchor="middle" fill="#5a5a5a" font-family="Liberation Sans" stroke="#f4f3ee" stroke-width="2" paint-order="stroke">Lister St</text>
<text transform="translate(1285 485) rotate(-72)" font-size="10.5" text-anchor="middle" fill="#5a5a5a" font-family="Liberation Sans" stroke="#f4f3ee" stroke-width="2" paint-order="stroke">Broadway</text>
<text transform="translate(1582 368) rotate(20)" font-size="10.5" text-anchor="middle" fill="#5a5a5a" font-family="Liberation Sans" stroke="#f4f3ee" stroke-width="2" paint-order="stroke">Ste</text>
<text transform="translate(150 540) rotate(-25)" font-size="10.5" text-anchor="middle" fill="#5a5a5a" font-family="Liberation Sans" stroke="#f4f3ee" stroke-width="2" paint-order="stroke">New Scotland Rd</text>
<text transform="translate(108 600) rotate(-70)" font-size="10.5" text-anchor="middle" fill="#5a5a5a" font-family="Liberation Sans" stroke="#f4f3ee" stroke-width="2" paint-order="stroke">Hackett Rd</text>
<text transform="translate(105 316) rotate(0)" font-size="10.5" text-anchor="middle" fill="#5a5a5a" font-family="Liberation Sans" stroke="#f4f3ee" stroke-width="2" paint-order="stroke">Russ</text>
<text x="811" y="230" font-size="10.5" text-anchor="middle" fill="#4a9a3c" font-family="Liberation Sans" stroke="#f4f3ee" stroke-width="1.5" paint-order="stroke">Swineburne</text>
<text x="811" y="241" font-size="10.5" text-anchor="middle" fill="#4a9a3c" font-family="Liberation Sans" stroke="#f4f3ee" stroke-width="1.5" paint-order="stroke">Park</text>
<text x="965" y="230" font-size="10.5" text-anchor="middle" fill="#333" font-family="Liberation Sans" stroke="#f4f3ee" stroke-width="1.5" paint-order="stroke">Tivoli Lakes</text>
<text x="965" y="241" font-size="10.5" text-anchor="middle" fill="#333" font-family="Liberation Sans" stroke="#f4f3ee" stroke-width="1.5" paint-order="stroke">Wildlife Park</text>
<text x="426" y="329" font-size="10.5" text-anchor="middle" fill="#4a9a3c" font-family="Liberation Sans" stroke="#f4f3ee" stroke-width="1.5" paint-order="stroke">Buckingham</text>
<text x="426" y="341" font-size="10.5" text-anchor="middle" fill="#4a9a3c" font-family="Liberation Sans" stroke="#f4f3ee" stroke-width="1.5" paint-order="stroke">Lake Park</text>
<text x="686" y="341" font-size="10.5" text-anchor="middle" fill="#333" font-family="Liberation Sans" stroke="#f4f3ee" stroke-width="1.5" paint-order="stroke">College of</text>
<text x="686" y="352" font-size="10.5" text-anchor="middle" fill="#333" font-family="Liberation Sans" stroke="#f4f3ee" stroke-width="1.5" paint-order="stroke">St Rose</text>
<text x="486" y="471" font-size="10.5" text-anchor="middle" fill="#333" font-family="Liberation Sans" stroke="#f4f3ee" stroke-width="1.5" paint-order="stroke">St Peter's</text>
<text x="486" y="482" font-size="10.5" text-anchor="middle" fill="#333" font-family="Liberation Sans" stroke="#f4f3ee" stroke-width="1.5" paint-order="stroke">Hospital</text>
<text x="794" y="491" font-size="10.5" text-anchor="middle" fill="#333" font-family="Liberation Sans" stroke="#f4f3ee" stroke-width="1.5" paint-order="stroke">Albany Medical</text>
<text x="309" y="567" font-size="10.5" text-anchor="middle" fill="#333" font-family="Liberation Sans" stroke="#f4f3ee" stroke-width="1.5" paint-order="stroke">Capital Hills</text>
<text x="309" y="578" font-size="10.5" text-anchor="middle" fill="#333" font-family="Liberation Sans" stroke="#f4f3ee" stroke-width="1.5" paint-order="stroke">at Albany</text>
<text x="1511" y="447" font-size="11.5" font-weight="bold" fill="#333" font-family="Liberation Sans">Rosemont Pa</text>
<text x="517" y="83" font-size="10" font-style="italic" fill="#4a3c20" font-family="Liberation Sans">268 ft</text>
<path d="M436 216L836 382L797 433L960 560L700 1000L437 580L252 427Z" fill="#7eb0f5" fill-opacity="0.42" stroke="#6ff0f4" stroke-width="7" stroke-linejoin="miter"/>
<path d="M436 216L836 382L797 433L960 560L700 1000L437 580L252 427Z" fill="none" stroke="#111" stroke-width="1.6"/>
<path d="M250 213.5H908V700M250 213.5V700" stroke="#f5a11c" stroke-width="2.4" fill="none"/>
<rect x="245.0" y="208.5" width="10" height="10" fill="#fff" stroke="#f5a11c" stroke-width="2"/>
<rect x="903.0" y="208.5" width="10" height="10" fill="#fff" stroke="#f5a11c" stroke-width="2"/>
<rect x="571" y="478" width="10" height="10" fill="#cfdcf0" stroke="#d0952a" stroke-width="2"/>
<circle cx="870" cy="269" r="5.5" fill="#1a6ee8"/>
<circle cx="816" cy="394" r="5.5" fill="#1a6ee8"/>
<circle cx="569" cy="424" r="5.5" fill="#1a6ee8"/>
</svg></div>
 </div>
</div>


<div id="tools" class="abs" style="left:0;top:0">
 <div class="abs tb" style="left:113px;top:92px;width:42px;height:40px"></div>
 <div class="abs tb" style="left:113px;top:134px;width:42px;height:40px"></div>
 <div class="abs tb" style="left:114px;top:187px;width:40px;height:320px"></div>
 <div class="abs" style="left:114px;top:227px;width:40px;height:40px;background:#f0f0f0"></div>
 <svg class="abs" style="left:0;top:0" width="200" height="520" fill="none" stroke="#5f6368" stroke-width="2">
  <path d="M127 112H141M134 105V119" stroke-width="1.9"/>
  <path d="M125.8 152.5H142.2" stroke-width="1.9"/>
  <path d="M134 214.5c-.5-3-6.2-7-6.2-11.2a6.2 6.2 0 0 1 12.4 0c0 4.2-5.7 8.2-6.2 11.2z" fill="#5f6368" stroke="none"/><circle cx="134" cy="203.3" r="2.1" fill="#fff" stroke="none"/><path d="M127 217.5H141" stroke-width="1.6"/>
  <path d="M124 251L132 243L136.5 248.5L143 242" stroke-width="1.7"/><circle cx="124" cy="251" r="1.7" fill="#5f6368" stroke="none"/><circle cx="132" cy="243" r="1.7" fill="#5f6368" stroke="none"/><circle cx="136.5" cy="248.5" r="1.7" fill="#5f6368" stroke="none"/><circle cx="143" cy="242" r="1.7" fill="#5f6368" stroke="none"/>
  <rect x="125" y="280" width="17" height="13" stroke-width="1.8"/>
  <path d="M124.8 322.5V334H143.2V319L133.6 327.8Z" stroke-width="1.8" stroke-linejoin="miter"/>
  <circle cx="134" cy="367" r="8.3" stroke-width="1.8"/>
  <path d="M129 400.5L139.5 407.2L135 408.4L138.3 414L136.2 415.3L132.8 409.6L129.8 412.8Z" fill="none" stroke-width="1.6" stroke-linejoin="round"/>
  <path d="M125.3 443V438.8H129.5M138.5 438.8H142.7V443M142.7 451V455.2H138.5M129.5 455.2H125.3V451" stroke-width="1.8"/><path d="M132.6 438.8H133.6M135.6 438.8H136.6M132.6 455.2H133.6M135.6 455.2H136.6M125.3 446.4V447.4M125.3 449V450M142.7 446.4V447.4M142.7 449V450" stroke-width="1.8"/>
  <path d="M128 494.3H136.2a8 8 0 1 0 -8 -8Z" stroke-width="1.8" stroke-linejoin="round"/><circle cx="136.2" cy="486.3" r="2.7" stroke-width="1.7"/><path d="M125 490.5V494.5" stroke-width="1.8"/>
 </svg>
</div>
<div id="modal" class="abs"></div>
<div id="mc" class="abs" style="left:0;top:0;width:1699px;height:1196px">
 <div class="abs" style="left:479px;top:522.5px;font-size:41px;font-weight:bold;color:#353a6a;letter-spacing:-1.65px;line-height:50px;white-space:nowrap">Create a Policy</div>
 <div class="abs" style="left:480.5px;top:583px;font-size:18.5px;color:#3d4270;letter-spacing:-0.22px;line-height:24px;white-space:nowrap">We’ll have you off to the races in no time.</div>
 <div class="abs" style="left:517px;top:651px;font-size:20.5px;font-weight:bold;color:#353a6a;letter-spacing:-0.7px;line-height:24px;white-space:nowrap">Vehicle Types</div>
 <div class="abs" style="left:1035px;top:655px;font-size:14.5px;color:#5d6085;letter-spacing:-0.2px;line-height:18px;white-space:nowrap"><span style="color:#1f6fe0">*</span> Indicates a required field</div>
 <div class="abs" style="left:1286px;top:651px;font-size:16.4px;font-weight:bold;color:#0b5fd6;letter-spacing:-0.75px;line-height:20px;white-space:nowrap">Cancel</div>
 <div class="abs" style="left:1368.5px;top:641px;width:69.5px;height:40px;background:#0a63e0;border-radius:4px;box-shadow:0 1px 3px rgba(0,0,0,.3)"></div>
 <div class="abs" style="left:1386px;top:651px;font-size:16.4px;font-weight:bold;color:#fff;letter-spacing:-0.6px;line-height:20px;white-space:nowrap">Next</div>
 <div class="abs" style="left:438px;top:696.5px;width:1009px;height:1.5px;background:#eceef4"></div>
 <div class="abs" style="left:481px;top:730px;font-size:16px;font-weight:bold;color:#54598a;letter-spacing:-0.4px;line-height:20px;white-space:nowrap">Select Vehicle Types Covered</div>
 <div class="abs" style="left:400px;top:766px;width:251px;text-align:right;font-size:16px;color:#5c6191;line-height:20px;white-space:nowrap">asdkjflk asdklfasdkj faskdj</div>
 <div class="abs" style="left:400px;top:786px;width:254px;text-align:right;font-size:16px;color:#5c6191;line-height:20px;white-space:nowrap">asdkjhf aksdjhf aksdjhf</div>
 <div class="abs" style="left:400px;top:806px;width:160.5px;text-align:right;font-size:16px;color:#5c6191;line-height:20px;white-space:nowrap">asdhf aks</div>
 <div class="abs card" style="left:754.5px;top:723px;width:219px;height:131px;"></div>
 <div class="abs" style="left:754.5px;top:739px;width:219px;text-align:center;font-size:16px;color:#54598a;line-height:20px">Bicycle</div>
 <div class="abs card" style="left:989.5px;top:723px;width:219px;height:131px;"></div>
 <div class="abs" style="left:989.5px;top:739px;width:219px;text-align:center;font-size:16px;color:#54598a;line-height:20px">Cargo Bicycle</div>
 <div class="abs card" style="left:1224.0px;top:723px;width:219px;height:131px;"></div>
 <div class="abs" style="left:1224.0px;top:739px;width:219px;text-align:center;font-size:16px;color:#54598a;line-height:20px">Car</div>
 <div class="abs card" style="left:754.5px;top:869px;width:219px;height:131px;"></div>
 <div class="abs" style="left:754.5px;top:885px;width:219px;text-align:center;font-size:16px;color:#54598a;line-height:20px">Motorcycle</div>
 <div class="abs card" style="left:989.5px;top:869px;width:219px;height:131px;"></div>
 <div class="abs" style="left:989.5px;top:885px;width:219px;text-align:center;font-size:16px;color:#54598a;line-height:20px">Scooter</div>
 <div class="abs card sel" style="left:1224.0px;top:869px;width:219px;height:131px;"></div>
 <div class="abs" style="left:1220.0px;top:885px;width:219px;text-align:center;font-size:16px;font-weight:bold;color:#0b5fd6;letter-spacing:-0.45px;line-height:20px">Truck (Small)</div>
 <div class="abs card" style="left:754.5px;top:1015px;width:219px;height:131px;"></div>
 <div class="abs" style="left:754.5px;top:1031px;width:219px;text-align:center;font-size:16px;color:#54598a;line-height:20px">Van</div>
 <div class="abs card" style="left:989.5px;top:1015px;width:219px;height:131px;"></div>
 <div class="abs" style="left:989.5px;top:1031px;width:219px;text-align:center;font-size:16px;color:#54598a;line-height:20px">Freight</div>
 <div class="abs card" style="left:1224.0px;top:1015px;width:219px;height:131px;"></div>
 <div class="abs" style="left:1224.0px;top:1031px;width:219px;text-align:center;font-size:16px;color:#54598a;line-height:20px">Other</div>
 <div class="abs" style="left:1410px;top:870px;width:32px;height:30px;background:#0a63e0;border-radius:7px 9px 7px 7px"></div>
 <svg class="abs" style="left:1410px;top:870px" width="32" height="30"><path d="M8.5 15.5L13.5 20.5L23.5 10" fill="none" stroke="#fff" stroke-width="2.2"/></svg>
 <div class="abs" style="left:1475px;top:719px;font-size:16.4px;font-weight:bold;color:#353a6a;letter-spacing:-0.75px;line-height:20px;white-space:nowrap">Progress</div>
 <div class="abs" style="left:1487.4px;top:767.5px;width:24px;height:24px;border-radius:12px;background:#e3e3ef;color:#3b3f66;font-size:13px;font-weight:bold;text-align:center;line-height:24px">1</div>
 <div class="abs" style="left:1523.5px;top:770.0px;font-size:14.5px;color:#54598a;line-height:18px;white-space:nowrap;letter-spacing:-0.1px">Location</div>
 <div class="abs" style="left:1487.4px;top:814.5px;width:24px;height:24px;border-radius:12px;background:#353a6a;color:#fff;font-size:13px;font-weight:bold;text-align:center;line-height:24px">2</div>
 <div class="abs" style="left:1523.5px;top:817.0px;font-size:14.5px;font-weight:bold;color:#353a6a;line-height:18px;white-space:nowrap;letter-spacing:-0.45px">Vehicle Types</div>
 <div class="abs" style="left:1487.4px;top:861.5px;width:24px;height:24px;border-radius:12px;background:#e3e3ef;color:#3b3f66;font-size:13px;font-weight:bold;text-align:center;line-height:24px">4</div>
 <div class="abs" style="left:1523.5px;top:864.0px;font-size:14.5px;color:#54598a;line-height:18px;white-space:nowrap;letter-spacing:-0.1px">Sources</div>
 <div class="abs" style="left:1487.4px;top:908.5px;width:24px;height:24px;border-radius:12px;background:#e3e3ef;color:#3b3f66;font-size:13px;font-weight:bold;text-align:center;line-height:24px">5</div>
 <div class="abs" style="left:1523.5px;top:911.0px;font-size:14.5px;color:#54598a;line-height:18px;white-space:nowrap;letter-spacing:-0.1px">Schedule</div>
 <div class="abs" style="left:1487.4px;top:955.5px;width:24px;height:24px;border-radius:12px;background:#e3e3ef;color:#3b3f66;font-size:13px;font-weight:bold;text-align:center;line-height:24px">6</div>
 <div class="abs" style="left:1523.5px;top:958.0px;font-size:14.5px;color:#54598a;line-height:18px;white-space:nowrap;letter-spacing:-0.1px">Fee</div>
</div>
<svg class="abs" style="left:0;top:0" width="1699" height="1196" viewBox="0 0 1699 1196">
<defs>
 <radialGradient id="tire"><stop offset="0.55" stop-color="#9a9a9a"/><stop offset="0.62" stop-color="#555"/><stop offset="0.75" stop-color="#222"/></radialGradient>
 <linearGradient id="boxg" x1="0" y1="0" x2="0" y2="1"><stop offset="0" stop-color="#d9dee7"/><stop offset="0.45" stop-color="#d4dae4"/><stop offset="0.5" stop-color="#e6e9ef"/><stop offset="1" stop-color="#cfd5df"/></linearGradient>
 <linearGradient id="trg" x1="0" y1="0" x2="0" y2="1"><stop offset="0" stop-color="#fafbfc"/><stop offset="0.6" stop-color="#eef0f4"/><stop offset="1" stop-color="#cfd3da"/></linearGradient>
</defs>
<!-- bicycle -->
<g fill="none" stroke-linecap="round">
 <circle cx="845.3" cy="805.3" r="13" stroke="#000" stroke-width="2.2"/>
 <circle cx="882.8" cy="805.3" r="13" stroke="#000" stroke-width="2.2"/>
 <path d="M845.3 805.3L856.8 788.3L875.3 787.6L882.8 805.3M856.8 788.3L862.8 806M875.3 787.6L863.5 805M845.3 805.3L862.8 806.2" stroke="#f00" stroke-width="2"/>
 <path d="M851.5 781.6H861.8M856.8 782L856.8 788.3M874.3 785L874.6 784.5Q880 785 883.7 782.5" stroke="#000" stroke-width="2"/>
 <circle cx="863" cy="806" r="2.6" stroke="#000" stroke-width="1.6"/>
 <path d="M864.5 799L861 813" stroke="#000" stroke-width="1.4"/>
</g>
<!-- cargo bicycle -->
<g>
 <circle cx="1060.1" cy="819.4" r="10.2" fill="none" stroke="#4b1c8f" stroke-width="2.8"/>
 <circle cx="1144.2" cy="824" r="6.2" fill="none" stroke="#4b1c8f" stroke-width="2.4"/>
 <path d="M1060 820L1076 797L1094 801L1097 820ZM1085 791L1093 792L1097 820M1059 820H1097" fill="none" stroke="#b49be6" stroke-width="1.5"/>
 <path d="M1097 817H1136L1139 822H1097Z" fill="#b49be6"/>
 <path d="M1136 817L1141 812L1144 824" fill="none" stroke="#b49be6" stroke-width="1.6"/>
 <path d="M1097 799H1136V817H1097Z" fill="#e8a020"/>
 <path d="M1097 802H1136V805H1097ZM1097 810H1136V813H1097Z" fill="#f0c800"/>
 <path d="M1118 791.5H1126V799H1118Z" fill="#e07c2a"/>
 <path d="M1106 799V817M1123 792V817" stroke="#5a2a70" stroke-width="1"/>
 <path d="M1066 792L1080 779L1083 781L1092 791L1086 793L1080 786L1070 796Z" fill="#b39ae6"/>
 <path d="M1067 793Q1075 790 1087 797L1083 800L1076 817L1071 815L1075 800L1068 800Z" fill="#4d1c92"/>
 <circle cx="1081" cy="778" r="3.2" fill="#e07c2a"/>
 <path d="M1076.5 776Q1081 770 1086 776Z" fill="#f0c000"/>
 <path d="M1071 816H1077V819H1071Z" fill="#f0c000"/>
</g>
<!-- car -->
<g>
 <path d="M1278.5 797Q1279 791 1292 789L1310 787Q1322 779 1335 778.5L1362 779Q1374 781 1380 790L1384 798Q1385 806 1382 808L1370 811H1292L1280 809Q1278 805 1278.5 797Z" fill="#3b86ee"/>
 <path d="M1316 787Q1326 781 1338 781L1338 790L1318 791Z" fill="#4d4f55"/>
 <path d="M1342 781H1358L1360 790H1342Z" fill="#4d4f55"/>
 <path d="M1362 782L1372 784L1371 790H1363Z" fill="#4d4f55"/>
 <path d="M1371 791L1380 792L1380 795L1373 794Z" fill="#e0303a"/>
 <path d="M1281 796L1290 795L1289 799L1282 799Z" fill="#e8eef8"/>
 <circle cx="1298" cy="808.5" r="7.6" fill="url(#tire)"/>
 <circle cx="1365.7" cy="808.5" r="7.6" fill="url(#tire)"/>
</g>
<!-- motorcycle -->
<g>
 <circle cx="837.8" cy="957.6" r="9.5" fill="none" stroke="#222" stroke-width="2.6"/>
 <circle cx="837.8" cy="957.6" r="2.6" fill="none" stroke="#333" stroke-width="1.4"/>
 <circle cx="883.9" cy="957.6" r="9.5" fill="none" stroke="#222" stroke-width="2.6"/>
 <circle cx="883.9" cy="957.6" r="2.6" fill="none" stroke="#333" stroke-width="1.4"/>
 <path d="M828 937.5L843 939.5L854 941L858 935L870 934L879 941L873 952L862 960L852 961L845 956L836 945L828 944Z" fill="#1f2326"/>
 <path d="M859 937Q866 935 874 937L879 941L867 950L863 952Q868 945 870 941L862 941Z" fill="#f5a01f"/>
 <path d="M840 943L851 946L852 952L845 951Z" fill="#f5a01f"/>
 <path d="M855 950L870 952L866 960L856 961Z" fill="#9e9e9e"/>
 <path d="M874 929Q880 933 881 939L876 940Z" fill="#3a3a3a"/>
 <path d="M879 945L884 957" stroke="#888" stroke-width="1.2"/>
 <path d="M830 967H893" stroke="#d5d5d8" stroke-width="1"/>
</g>
<!-- scooter -->
<g fill="none" stroke-linecap="round">
 <path d="M1088.8 924.5L1082 956" stroke="#333" stroke-width="1.6"/>
 <path d="M1087 924H1091" stroke="#e0502a" stroke-width="1.6"/>
 <path d="M1084 945L1082 956L1086 957H1108L1111 955" stroke="#e0502a" stroke-width="1.8"/>
 <circle cx="1082.3" cy="957.8" r="3.3" fill="#333" stroke="none"/>
 <circle cx="1110.6" cy="957.2" r="3" stroke="#555" stroke-width="1.4"/>
</g>
<!-- truck small -->
<g>
 <rect x="1296.2" y="920.6" width="52.4" height="28.2" fill="url(#boxg)" stroke="#c5ccd6" stroke-width="0.8"/>
 <path d="M1350 930H1366.5Q1370 935 1371.5 944V955H1350Z" fill="#f2f4f7" stroke="#d0d5dc" stroke-width="0.5"/>
 <path d="M1354 931.2H1365.5Q1368 935 1368.3 943L1354 940Z" fill="#1d3a52"/>
 <path d="M1299 948.5H1349V955.5H1299Z" fill="#2b2d30"/>
 <path d="M1347 955Q1348 948 1355 948Q1362 948 1363 955Z" fill="#2b2d30"/>
 <path d="M1366 952H1373V955.5H1366Z" fill="#2b2d30"/>
 <circle cx="1307.4" cy="956.5" r="5.9" fill="#222"/><circle cx="1307.4" cy="956.5" r="3.4" fill="#a8a8aa"/>
 <circle cx="1354.7" cy="956.5" r="5.9" fill="#222"/><circle cx="1354.7" cy="956.5" r="3.4" fill="#a8a8aa"/>
 <rect x="1300" y="948" width="2.5" height="1.5" fill="#f08a20"/><rect x="1321" y="948" width="2.5" height="1.5" fill="#f08a20"/><rect x="1340" y="948" width="2.5" height="1.5" fill="#f08a20"/>
 <path d="M1296 963H1372" stroke="#cfd8e6" stroke-width="1.5" opacity="0.7"/>
 <rect x="1297" y="965" width="75" height="12" fill="#dbe5f3" opacity="0.4"/>
</g>
<!-- van -->
<g>
 <path d="M817.5 1097V1080Q818 1072 825 1071.5H880L892 1082L905 1085Q907.5 1087 907.5 1092V1099H817.5Z" fill="#fbfbfc" stroke="#cfcfd4" stroke-width="0.8"/>
 <path d="M871.5 1074H883L890 1082.5H871.5Z" fill="#4a4a4e"/>
 <path d="M819 1097.5H907" stroke="#3a1a10" stroke-width="1.8"/>
 <circle cx="834.5" cy="1097.5" r="6.3" fill="url(#tire)"/>
 <circle cx="894.6" cy="1097.5" r="6.3" fill="url(#tire)"/>
 <rect x="817" y="1086" width="1.8" height="3" fill="#d42020"/>
</g>
<!-- freight -->
<g>
 <rect x="1011.2" y="1066.8" width="137.7" height="27" fill="url(#trg)" stroke="#c8ccd3" stroke-width="0.8"/>
 <path d="M1012 1067H1148" stroke="#c98a5a" stroke-width="1" stroke-dasharray="3 2"/>
 <path d="M1012 1093.5H1148" stroke="#b07a50" stroke-width="1" stroke-dasharray="3 2"/>
 <path d="M1153 1102V1067H1162Q1168 1075 1170 1085L1184 1087Q1187 1090 1187 1096V1102Z" fill="#eceef2" stroke="#c4c8cf" stroke-width="0.8"/>
 <path d="M1159 1076H1166L1168 1082H1159Z" fill="#5a5d64"/>
 <path d="M1153.5 1068V1093" stroke="#333" stroke-width="1.4"/>
 <path d="M1016 1095H1042M1115 1095H1170" stroke="#333" stroke-width="2"/>
 <circle cx="1023.5" cy="1100.9" r="5.5" fill="url(#tire)"/><circle cx="1036.5" cy="1100.9" r="5.5" fill="url(#tire)"/>
 <circle cx="1124.8" cy="1100.9" r="5.5" fill="url(#tire)"/><circle cx="1137.7" cy="1100.9" r="5.5" fill="url(#tire)"/>
 <circle cx="1175.4" cy="1100.9" r="5.5" fill="url(#tire)"/>
</g>
<!-- other -->
<g>
 <path d="M1279.5 1063L1294 1059H1328V1110H1294L1279.5 1107Z" fill="#f4f4f6" stroke="#ccc" stroke-width="0.8"/>
 <path d="M1280.5 1070L1294 1067V1106L1280.5 1105Z" fill="#1f6fd6"/>
 <rect x="1302" y="1080" width="23.5" height="8" fill="#d8202a"/>
 <text x="1313.7" y="1086.6" font-size="7" font-weight="bold" fill="#fff" text-anchor="middle" font-family="Liberation Sans">PODS</text>
 <path d="M1330 1071.5H1395L1401 1085L1402.5 1097V1103.5H1330Z" fill="#f0c000"/>
 <path d="M1330 1070.5H1395" stroke="#222" stroke-width="1.2"/>
 <rect x="1337" y="1061.5" width="48" height="6.5" rx="3" fill="#f0c000"/>
 <text x="1361" y="1066.8" font-size="4.5" fill="#5a3a00" text-anchor="middle" font-family="Liberation Sans">FOOD TRUCK</text>
 <path d="M1341 1068V1071M1379 1068V1071" stroke="#333" stroke-width="1"/>
 <rect x="1340" y="1075" width="38" height="14" fill="#444"/>
 <rect x="1344.5" y="1077" width="8" height="11" fill="#6aa8b8"/><rect x="1368" y="1077" width="8" height="11" fill="#6aa8b8"/>
 <rect x="1381" y="1077" width="9" height="9" fill="#8cc8dc"/><rect x="1391.5" y="1075.5" width="5" height="12" fill="#8cc8dc"/>
 <path d="M1338 1089.5H1379" stroke="#222" stroke-width="1"/>
 <circle cx="1347.3" cy="1102.3" r="4.6" fill="#eee" stroke="#222" stroke-width="2.2"/>
 <circle cx="1394" cy="1102.3" r="4.6" fill="#eee" stroke="#222" stroke-width="2.2"/>
 <path d="M1328 1107.5H1407" stroke="#999" stroke-width="1"/>
</g>
</svg>

<div id="photo" class="abs">
<svg width="501" height="446" viewBox="3 646 501 446" style="display:block">
 <defs>
  <linearGradient id="sky" x1="0" y1="0" x2="0.35" y2="1"><stop offset="0" stop-color="#8caeea"/><stop offset="0.55" stop-color="#b9cdee"/><stop offset="1" stop-color="#e3e9f0"/></linearGradient>
  <linearGradient id="road" x1="0" y1="0" x2="0" y2="1"><stop offset="0" stop-color="#b4b4b4"/><stop offset="0.3" stop-color="#a6a6a6"/><stop offset="1" stop-color="#959595"/></linearGradient>
  <linearGradient id="lblk" x1="0" y1="0" x2="1" y2="0"><stop offset="0" stop-color="#a9b0b9"/><stop offset="1" stop-color="#98a0aa"/></linearGradient>
 </defs>
 <rect x="3" y="646" width="501" height="446" fill="url(#sky)"/>
 <!-- left distant trees -->
 <g fill="#cfcac2" opacity="0.6"><ellipse cx="35" cy="862" rx="22" ry="28"/><ellipse cx="70" cy="868" rx="20" ry="22"/><ellipse cx="110" cy="858" rx="16" ry="26"/></g><path d="M30 890L30 872M30 872L36 861M36 861L43 856M43 856L49 856M43 856L46 850M36 861L35 852M35 852L37 846M35 852L32 847M30 872L24 861M24 861L23 852M23 852L24 846M23 852L19 847M24 861L18 854M18 854L16 848M18 854L12 853" stroke="#c9c3bb" stroke-width="1" fill="none"/><path d="M55 890L55 872M55 872L62 862M62 862L70 858M70 858L76 858M70 858L74 853M62 862L63 853M63 853L67 848M63 853L61 847M55 872L51 860M51 860L52 851M52 851L55 846M52 851L50 845M51 860L46 853M46 853L44 847M46 853L41 850" stroke="#c9c3bb" stroke-width="1" fill="none"/><path d="M80 890L80 872M80 872L86 861M86 861L94 857M94 857L100 856M94 857L98 852M86 861L88 852M88 852L92 848M88 852L86 847M80 872L75 860M75 860L76 852M76 852L79 846M76 852L73 846M75 860L68 855M68 855L64 851M68 855L62 855" stroke="#c9c3bb" stroke-width="1" fill="none"/><path d="M110 890L110 872M110 872L116 861M116 861L122 855M122 855L128 852M122 855L125 849M116 861L117 852M117 852L119 846M117 852L115 846M110 872L103 861M103 861L102 853M102 853L104 847M102 853L100 847M103 861L97 855M97 855L95 850M97 855L91 854" stroke="#c9c3bb" stroke-width="1" fill="none"/><path d="M125 890L125 872M125 872L129 860M129 860L136 854M136 854L141 852M136 854L138 848M129 860L128 851M128 851L130 846M128 851L125 846M125 872L118 862M118 862L118 853M118 853L121 847M118 853L116 847M118 862L110 858M110 858L105 854M110 858L104 859" stroke="#c9c3bb" stroke-width="1" fill="none"/>
 <rect x="3" y="872" width="100" height="18" fill="#b9b4aa"/>
 <!-- left block -->
 <path d="M99 751L161 703L185 700V888H99Z" fill="url(#lblk)"/>
 <path d="M133 727V888" stroke="#8d959f" stroke-width="1"/>
 <g stroke="#9ea6b0" stroke-width="0.6" opacity="0.7"><path d="M99 760H185M99 772H185M99 784H185M99 796H185M99 808H185M99 820H185M99 832H185M99 844H185M99 856H185M99 868H185"/></g>
 <path d="M168 703L185 700V886H168Z" fill="#c99132"/>
 <!-- main block -->
 <path d="M184 692L248 646V852H184Z" fill="#8d949c"/>
 <path d="M248 646L504 697V852H248Z" fill="#5d646d"/>
 <g stroke="#6a717a" stroke-width="0.8" opacity="0.8"><path d="M248 660L504 708M248 680L504 725M248 700L504 742M248 720L504 759M248 740L504 776M248 760L504 793M248 780L504 810M248 800L504 827M248 820L504 843"/></g>
 <path d="M184 852H504V893H184Z" fill="#4a4740"/>
 <g fill="#8a6f55" opacity="0.85"><ellipse cx="365" cy="872" rx="14" ry="26"/><ellipse cx="460" cy="872" rx="16" ry="26"/><ellipse cx="495" cy="870" rx="10" ry="24"/><ellipse cx="395" cy="880" rx="10" ry="16"/></g>
 <!-- tree -->
<path d="M418 942L414 885" stroke="#d9d3cc" stroke-width="3.5" fill="none" stroke-linecap="round"/><path d="M414 885L383 828M414 885L445 828" stroke="#d9d3cc" stroke-width="3.0" fill="none" stroke-linecap="round"/><path d="M383 828L346 797M383 828L382 782M445 828L449 785M445 828L481 805M414 895L409 840" stroke="#d9d3cc" stroke-width="2.0" fill="none" stroke-linecap="round"/><path d="M346 797L311 793M346 797L327 770M382 782L371 749M382 782L397 752M449 785L436 759M449 785L465 763M481 805L500 783M481 805L509 802M409 840L387 805M409 840L421 802" stroke="#d9d3cc" stroke-width="1.5" fill="none" stroke-linecap="round"/><path d="M311 793L286 801M311 793L289 781M327 770L310 755M327 770L317 746M371 749L358 728M371 749L373 722M397 752L399 725M397 752L416 737M436 759L423 744M436 759L436 735M465 763L467 744M465 763L482 753M500 783L505 763M500 783L520 771M509 802L527 794M509 802L528 808M387 805L363 789M363 789L340 790M363 789L348 771M387 805L379 777M379 777L367 758M379 777L380 757M421 802L413 775M413 775L398 758M413 775L414 754M421 802L443 781M443 781L453 762M443 781L463 772" stroke="#d9d3cc" stroke-width="1.0" fill="none" stroke-linecap="round"/><path d="M286 801L270 812M270 812L262 825M270 812L257 813M286 801L269 801M269 801L258 806M269 801L256 796M289 781L269 783M269 783L257 793M269 783L256 777M289 781L277 770M277 770L265 768M277 770L273 759M310 755L295 753M295 753L284 756M295 753L285 748M310 755L301 740M301 740L291 732M301 740L298 728M317 746L305 732M305 732L294 725M305 732L300 720M317 746L320 726M320 726L317 710M320 726L326 711M358 728L342 718M342 718L328 716M342 718L335 707M358 728L354 709M354 709L343 699M354 709L354 694M373 722L367 700M367 700L359 686M367 700L372 683M373 722L382 703M382 703L381 687M382 703L393 690M399 725L396 704M396 704L390 689M396 704L400 688M399 725L406 708M406 708L403 694M406 708L414 697M416 737L426 723M426 723L428 709M426 723L437 717M416 737L434 731M434 731L442 720M434 731L448 733M423 744L410 739M410 739L400 739M410 739L404 732M423 744L418 732M418 732L410 725M418 732L420 723M436 735L430 719M430 719L419 710M430 719L432 705M436 735L447 719M447 719L450 705M447 719L458 710M467 744L464 729M464 729L459 720M464 729L467 719M467 744L473 730M473 730L473 719M473 730L483 723M482 753L491 742M491 742L492 733M491 742L500 737M482 753L498 755M498 755L509 752M498 755L507 760M505 763L503 748M503 748L499 736M503 748L506 737M505 763L513 750M513 750L513 738M513 750L523 743M520 771L527 756M527 756L529 744M527 756L536 750M520 771L540 769M540 769L550 761M540 769L552 772M527 794L536 781M536 781L537 770M536 781L546 774M527 794L543 795M543 795L554 793M543 795L551 800M528 808L544 807M544 807L553 799M544 807L553 811M528 808L538 820M538 820L547 823M538 820L541 830M340 790L325 798M340 790L325 785M348 771L332 763M348 771L346 755M367 758L355 750M367 758L364 743M380 757L376 745M380 757L386 746M398 758L382 753M398 758L393 743M414 754L410 740M414 754L425 741M453 762L452 746M453 762L465 750M463 772L472 760M463 772L480 772" stroke="#d9d3cc" stroke-width="0.5" fill="none" stroke-linecap="round"/>
 <!-- road & sidewalks -->
 <path d="M3 888H504V1092H3Z" fill="url(#road)"/>
 <path d="M3 886L180 892L250 903L230 905L3 896Z" fill="#cfcfcc"/>
 <path d="M338 915L504 925V940L338 930Z" fill="#c9c6bf"/>
 <path d="M338 930L504 940V945L338 937Z" fill="#e4e2de"/>
 <path d="M330 955L504 964V976L330 965Z" fill="#d9d8d4"/>
 <path d="M338 893H504V918L338 910Z" fill="#b8b5ae"/>
 <g fill="#e6cf2c"><ellipse cx="488" cy="916" rx="20" ry="18"/><ellipse cx="75" cy="888" rx="12" ry="5"/><ellipse cx="225" cy="899" rx="16" ry="6"/><ellipse cx="380" cy="893" rx="8" ry="5"/><ellipse cx="440" cy="885" rx="6" ry="8"/></g>
 <path d="M494 886Q500 876 504 876V896H494Z" fill="#dfe2e6"/>
 <path d="M360 1092Q400 1080 440 1092Z" fill="#4d4d4d"/>
 <!-- pole -->
 <path d="M161 697H168V1092H161Z" fill="#1c1c1e"/>
 <path d="M162 958H167V972H162Z" fill="#9a9a9a"/>
 <path d="M150 684Q150 681 165 681Q180 681 180 685L177 694Q165 698 153 694Z" fill="#3a3d42"/>
 <path d="M150 684Q150 680 165 680Q180 680 180 684L179 687H151Z" fill="#d27a37"/>
 <path d="M157 885H172V888H157Z" fill="#2a2a2a"/>
 <!-- woman -->
 <path d="M160 835Q168 832 176 840L240 862L238 878L176 852Q162 852 158 842Z" fill="#d49c6e"/>
 <path d="M248 830Q250 772 275 770Q300 770 310 800Q318 830 322 850L300 840L260 845L250 856Z" fill="#4a3527"/>
 <path d="M254 796Q266 790 282 800L284 826Q276 834 266 830L256 815Z" fill="#c98c68"/>
 <path d="M236 852L262 836L300 826L333 862L340 890L300 895L250 870Z" fill="#4b4e55"/>
 <path d="M243 858L260 835L275 830L300 822L318 834L333 866L339 955L286 963L245 968L242 935Z" fill="#d6ef36"/>
 <path d="M300 848L334 866L335 892L300 892Z" fill="#4b4e55"/>
 <path d="M287 828L296 828L290 940L281 940Z" fill="#ee7d2c"/>
 <path d="M242 940L339 920L340 936L244 955Z" fill="#ee7d2c"/>
 <path d="M256 838L270 830L272 845L258 852Z" fill="#ee7d2c"/>
 <path d="M196 906Q215 898 260 905L305 912L305 926L240 928Q215 935 198 925Z" fill="#d49c6e"/>
 <path d="M168 896L178 888L206 908L200 918L186 915Z" fill="#1a1a1a"/>
 <path d="M176 891L184 888L188 896Z" fill="#d6692a"/>
 <path d="M172 918L188 914L190 922L174 924Z" fill="#202020"/>
 <path d="M252 963L324 955L322 1010L316 1092H290L282 1020L276 1092H256L252 1020Z" fill="#977f4f"/>
 <path d="M286 1000L282 1092" stroke="#7f6a40" stroke-width="1.5"/>
 <path d="M266 948H276V956H266Z" fill="#4a2a20"/>
</svg>
</div>
</body></html>
